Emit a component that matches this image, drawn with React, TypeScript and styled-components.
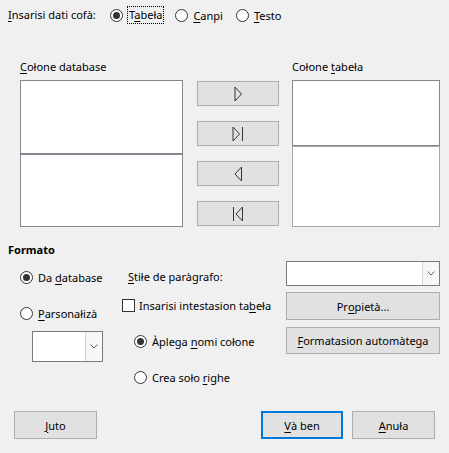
import React from "react";
import styled, { createGlobalStyle } from "styled-components";

const GlobalStyle = createGlobalStyle`
  html, body {
    margin: 0;
    padding: 0;
    background: #f0f0f0;
  }
  body {
    font-family: "Noto Sans", "Liberation Sans", sans-serif;
    font-size: 11px;
    color: #000;
  }
`;

const Dialog = styled.div`
  width: 449px;
  height: 453px;
  background: #f0f0f0;
  box-sizing: border-box;
  display: flex;
  flex-direction: column;
  overflow: hidden;
`;

const TopRow = styled.div`
  display: flex;
  align-items: center;
  height: 20px;
  margin-top: 5px;
  padding-left: 8px;
`;

const TopLabel = styled.span`
  width: 102px;
  white-space: nowrap;
  line-height: 20px;
`;

const Key = styled.u`
  text-decoration: underline;
  text-underline-offset: 2px;
`;

const Row = styled.label<{ $indent?: number; $gap?: number; $mt?: number }>`
  display: flex;
  align-items: center;
  height: 20px;
  margin-left: ${(p) => p.$indent ?? 0}px;
  margin-right: ${(p) => p.$gap ?? 0}px;
  margin-top: ${(p) => p.$mt ?? 0}px;
  white-space: nowrap;
`;

const RadioCircle = styled.span<{ $checked?: boolean }>`
  width: 13px;
  height: 13px;
  box-sizing: border-box;
  border: 1px solid #333;
  border-radius: 50%;
  background: #fff;
  margin-right: 5px;
  display: flex;
  align-items: center;
  justify-content: center;
  flex-shrink: 0;
  &::after {
    content: "";
    display: ${(p) => (p.$checked ? "block" : "none")};
    width: 7px;
    height: 7px;
    border-radius: 50%;
    background: #333;
  }
`;

const Focus = styled.span`
  outline: 1px dotted #000;
  padding: 0 1px;
  line-height: 16px;
`;

const CheckBox = styled.span`
  width: 13px;
  height: 13px;
  box-sizing: border-box;
  border: 1px solid #333;
  background: #fff;
  margin-right: 4px;
  flex-shrink: 0;
`;

const Columns = styled.div`
  display: flex;
  margin-top: 34px;
  padding-left: 20px;
`;

const ListColumn = styled.div<{ $width: number }>`
  width: ${(p) => p.$width}px;
  display: flex;
  flex-direction: column;
`;

const ColumnLabel = styled.div`
  height: 21px;
  line-height: 16px;
  white-space: nowrap;
`;

const ListBox = styled.div<{ $height: number; $light?: boolean }>`
  height: ${(p) => p.$height}px;
  box-sizing: border-box;
  background: #fff;
  border: 1px solid ${(p) => (p.$light ? "#a7a7a7" : "#828790")};
`;

const MoveColumn = styled.div`
  width: 82px;
  margin: 22px 13px 0 14px;
  display: flex;
  flex-direction: column;
  gap: 15px;
`;

const Button = styled.button<{
  $default?: boolean;
  $width?: number;
  $height?: number;
  $mt?: number;
  $ml?: number;
}>`
  width: ${(p) => (p.$width ? `${p.$width}px` : "100%")};
  height: ${(p) => p.$height ?? 25}px;
  margin-top: ${(p) => p.$mt ?? 0}px;
  margin-left: ${(p) => p.$ml ?? 0}px;
  box-sizing: border-box;
  background: #e1e1e1;
  border: ${(p) => (p.$default ? "2px solid #0078d7" : "1px solid #adadad")};
  border-radius: 0;
  padding: 0;
  font: inherit;
  color: #000;
  display: flex;
  align-items: center;
  justify-content: center;
  white-space: nowrap;
`;

const FormatTitle = styled.div`
  font-weight: bold;
  padding-left: 8px;
  margin-top: 14px;
  height: 18px;
  line-height: 18px;
`;

const FormatBody = styled.div`
  display: flex;
  margin-top: 2px;
`;

const LeftCol = styled.div`
  width: 102px;
  padding-left: 20px;
  display: flex;
  flex-direction: column;
  padding-top: 6px;
`;

const MidCol = styled.div`
  width: 164px;
  display: flex;
  flex-direction: column;
  padding-top: 5px;
`;

const RightCol = styled.div`
  width: 154px;
  display: flex;
  flex-direction: column;
`;

const Combo = styled.div<{ $width: number; $height: number; $ml?: number; $mt?: number }>`
  width: ${(p) => p.$width}px;
  height: ${(p) => p.$height}px;
  margin-left: ${(p) => p.$ml ?? 0}px;
  margin-top: ${(p) => p.$mt ?? 0}px;
  box-sizing: border-box;
  background: #fff;
  border: 1px solid #7a7a7a;
  display: flex;
  justify-content: flex-end;
`;

const ComboArrow = styled.div`
  width: 16px;
  border-left: 1px solid #d4d4d4;
  display: flex;
  align-items: center;
  justify-content: center;
  background: #f7f7f7;
`;

const Footer = styled.div`
  display: flex;
  margin-top: auto;
  margin-bottom: 14px;
  padding: 0 14px;
`;

const Spacer = styled.div`
  flex: 1;
`;

function Arrow({ dir, bar }: { dir: "right" | "left"; bar?: boolean }) {
  const w = bar ? 12 : 9;
  const tri =
    dir === "right"
      ? "1,1 7.5,8 1,15"
      : bar
      ? "10.5,1 4,8 10.5,15"
      : "7.5,1 1,8 7.5,15";
  const barX = dir === "right" ? 10.5 : 1.5;
  return (
    <svg width={w} height={16} viewBox={`0 0 ${w} 16`}>
      <polygon points={tri} fill="none" stroke="#333" strokeWidth={1} />
      {bar && <line x1={barX} y1={1} x2={barX} y2={15} stroke="#333" strokeWidth={1} />}
    </svg>
  );
}

function Chevron() {
  return (
    <svg width={8} height={5} viewBox="0 0 8 5">
      <polyline points="0.5,0.5 4,4 7.5,0.5" fill="none" stroke="#606060" strokeWidth={1} />
    </svg>
  );
}

function Radio({
  checked,
  children,
  indent,
  gap,
  mt,
}: {
  checked?: boolean;
  children: React.ReactNode;
  indent?: number;
  gap?: number;
  mt?: number;
}) {
  return (
    <Row $indent={indent} $gap={gap} $mt={mt}>
      <RadioCircle $checked={checked} />
      {children}
    </Row>
  );
}

export default function App() {
  return (
    <>
      <GlobalStyle />
      <Dialog>
        <TopRow>
          <TopLabel>
            <Key>I</Key>nsarisi dati cofà:
          </TopLabel>
          <Radio checked gap={12}>
            <Focus>
              T<Key>a</Key>beła
            </Focus>
          </Radio>
          <Radio gap={13}>
            <span>
              <Key>C</Key>anpi
            </span>
          </Radio>
          <Radio>
            <span>
              <Key>T</Key>esto
            </span>
          </Radio>
        </TopRow>

        <Columns>
          <ListColumn $width={163}>
            <ColumnLabel>
              <Key>C</Key>ołone database
            </ColumnLabel>
            <ListBox $height={74} />
            <ListBox $height={73} />
          </ListColumn>
          <MoveColumn>
            <Button>
              <Arrow dir="right" />
            </Button>
            <Button>
              <Arrow dir="right" bar />
            </Button>
            <Button>
              <Arrow dir="left" />
            </Button>
            <Button>
              <Arrow dir="left" bar />
            </Button>
          </MoveColumn>
          <ListColumn $width={148}>
            <ColumnLabel>
              Cołone <Key>t</Key>abeła
            </ColumnLabel>
            <ListBox $height={66} />
            <ListBox $height={81} $light />
          </ListColumn>
        </Columns>

        <FormatTitle>Formato</FormatTitle>
        <FormatBody>
          <LeftCol>
            <Radio checked>
              <span>
                Da <Key>d</Key>atabase
              </span>
            </Radio>
            <Radio mt={16}>
              <span>
                <Key>P</Key>arsonałizà
              </span>
            </Radio>
            <Combo $width={71} $height={31} $ml={12} $mt={8}>
              <ComboArrow>
                <Chevron />
              </ComboArrow>
            </Combo>
          </LeftCol>
          <MidCol>
            <Row $indent={6}>
              <span>
                <Key>S</Key>tiłe de paràgrafo:
              </span>
            </Row>
            <Row $mt={9}>
              <CheckBox />
              <span>
                Insarisi intestasion ta<Key>b</Key>eła
              </span>
            </Row>
            <Radio checked indent={12} mt={16}>
              <span>
                Àplega <Key>n</Key>omi cołone
              </span>
            </Radio>
            <Radio indent={12} mt={16}>
              <span>
                Crea soło <Key>r</Key>ighe
              </span>
            </Radio>
          </MidCol>
          <RightCol>
            <Combo $width={154} $height={25}>
              <ComboArrow>
                <Chevron />
              </ComboArrow>
            </Combo>
            <Button $height={28} $mt={6}>
              Pr<Key>o</Key>pietà...
            </Button>
            <Button $height={27} $mt={7}>
              <Key>F</Key>ormatasion automàtega
            </Button>
          </RightCol>
        </FormatBody>

        <Footer>
          <Button $width={83} $height={28}>
            <Key>J</Key>uto
          </Button>
          <Spacer />
          <Button $width={82} $height={28} $default>
            <Key>V</Key>à ben
          </Button>
          <Button $width={83} $height={28} $ml={9}>
            <Key>A</Key>nuła
          </Button>
        </Footer>
      </Dialog>
    </>
  );
}
